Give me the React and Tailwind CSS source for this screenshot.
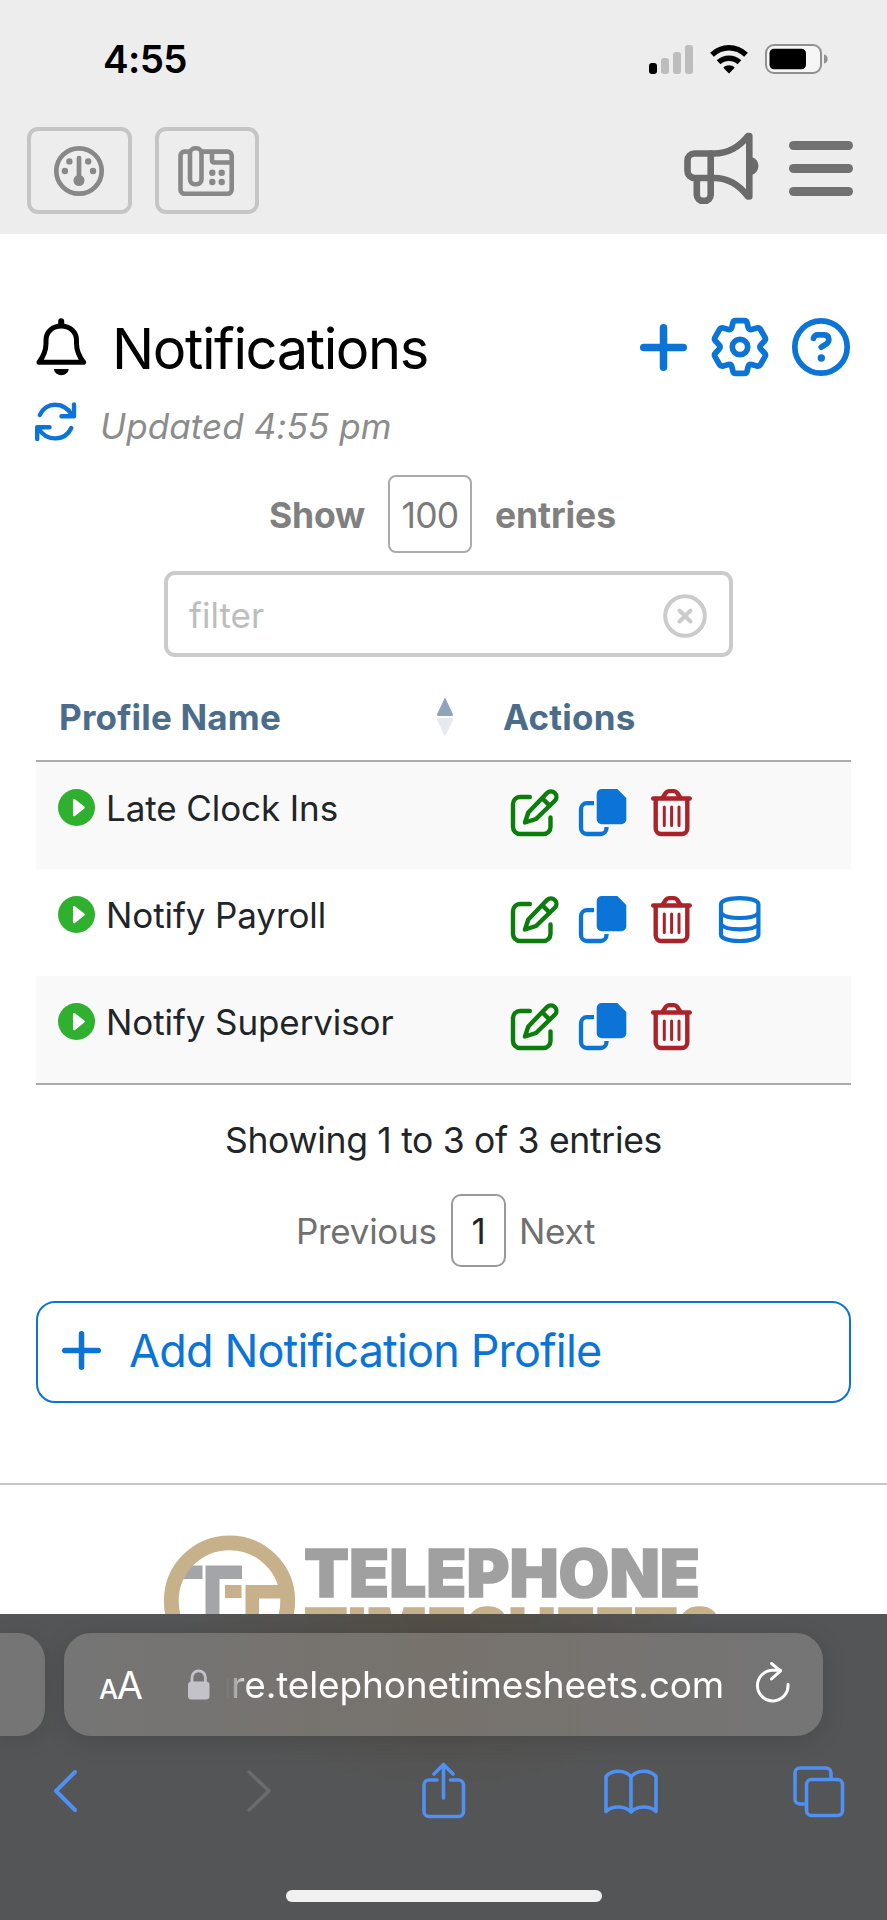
import React, { useState } from 'react';

const profiles = [
  { id: 1, name: 'Late Clock Ins', hasData: false },
  { id: 2, name: 'Notify Payroll', hasData: true },
  { id: 3, name: 'Notify Supervisor', hasData: false },
];

// Shared wrapper for all stroked icons
const Icon = ({ w, h, sw = 4, className = '', children }) => (
  <svg
    width={w}
    height={h}
    viewBox={`0 0 ${w} ${h}`}
    fill="none"
    stroke="currentColor"
    strokeWidth={sw}
    strokeLinecap="round"
    strokeLinejoin="round"
    className={`shrink-0 overflow-visible ${className}`}
  >
    {children}
  </svg>
);

const GaugeIcon = () => (
  <Icon w={50} h={50} sw={4.7}>
    <circle cx="25" cy="25" r="22.7" />
    <path d="M25 12V32" />
    <g fill="currentColor" stroke="none">
      <circle cx="25" cy="34.5" r="5.5" />
      <circle cx="15.4" cy="15.4" r="3.2" />
      <circle cx="34.2" cy="15.4" r="3.2" />
      <circle cx="10.9" cy="25" r="3.2" />
      <circle cx="39" cy="25" r="3.2" />
    </g>
  </Icon>
);

const FaxIcon = () => (
  <Icon w={56} h={50} sw={4.6}>
    <path d="M11 5.6H6.5a4 4 0 0 0-4 4V43.7a4 4 0 0 0 4 4H49.7a4 4 0 0 0 4-4V9.6a4 4 0 0 0-4-4H24" />
    <rect x="12" y="2.3" width="11.5" height="36" rx="5" />
    <path d="M34 6V14.5a2 2 0 0 0 2 2H53" />
    <g fill="currentColor" stroke="none">
      <circle cx="34.3" cy="26.7" r="3.2" />
      <circle cx="43.7" cy="26.7" r="3.2" />
      <circle cx="34.3" cy="36" r="3.2" />
      <circle cx="43.7" cy="36" r="3.2" />
    </g>
  </Icon>
);

const MegaphoneIcon = () => (
  <Icon w={73} h={72} sw={6.6}>
    <path d="M26.7 21.5H10.5a7 7 0 0 0-7 7V39a7 7 0 0 0 7 7H26.7Z" />
    <path d="M26.7 21.5H30C44 21.5 56 14 64 4H65.3V64.5H64C56 54 44 46 30 46H26.7" />
    <path d="M12.8 46.5V62.8a6 6 0 0 0 6 6H20.7a6 6 0 0 0 6-6V46.5" />
    <path d="M67.5 25a9.3 9.3 0 0 1 0 18Z" fill="currentColor" stroke="none" />
  </Icon>
);

const BellIcon = () => (
  <Icon w={51} h={58} sw={5}>
    <path d="M3 44.3C7 39 10 32.5 10 25.5V22.5C10 13.5 17 8 25.2 8S40.5 13.5 40.5 22.5V25.5C40.5 32.500 43.5 39 47.7 44.3Z" />
    <path d="M25.2 3.2V7" strokeWidth="6" />
    <path d="M17.8 51H32.8A7.6 7.6 0 0 1 17.8 51Z" fill="currentColor" stroke="none" />
  </Icon>
);

const RefreshIcon = () => (
  <Icon w={41} h={39} sw={4.4}>
    <path d="M4.8 13C10.5-0.5 29-1 37.5 13.5" />
    <path d="M39 2.5V14.2H26.5" />
    <path d="M36.3 26C30 39.5 11.5 40 3.5 26.5" />
    <path d="M2.2 37V25.3H14.5" />
  </Icon>
);

const PlusIcon = ({ size, sw }) => (
  <Icon w={size} h={size} sw={sw}>
    <path d={`M${size / 2} ${sw / 2}V${size - sw / 2}M${sw / 2} ${size / 2}H${size - sw / 2}`} />
  </Icon>
);

const GearIcon = () => (
  <Icon w={56} h={58} sw={5.7}>
    <g transform="translate(28 29)">
      <path d="M-4.5-26.4H4.5Q6.5-26.4 7-24.5L8.2-19.5Q9-17 11.5-17.500L17-19Q19.3-19.6 20.5-17.5L25-9.7Q26.2-7.5 24.5-6L21-2.3Q19 0 21 2.3L24.5 6Q26.2 7.5 25 9.7L20.5 17.5Q19.3 19.6 17 19L11.5 17.5Q9 17 8.2 19.5L7 24.5Q6.5 26.4 4.5 26.4H-4.5Q-6.5 26.4-7 24.5L-8.2 19.5Q-9 17-11.5 17.5L-17 19Q-19.3 19.6-20.5 17.5L-25 9.7Q-26.2 7.5-24.5 6L-21 2.3Q-19 0-21-2.3L-24.5-6Q-26.2-7.5-25-9.7L-20.5-17.5Q-19.3-19.6-17-19L-11.5-17.5Q-9-17-8.2-19.5L-7-24.5Q-6.5-26.4-4.5-26.4Z" />
      <circle r="7.7" />
    </g>
  </Icon>
);

const HelpIcon = () => (
  <Icon w={58} h={58} sw={5.7}>
    <circle cx="29" cy="29" r="26.2" />
    <path d="M21.5 20.3Q22.3 16.8 26 16.8H32Q36.8 17 36.8 21.5Q36.8 24.5 34 26.2L29.3 29.2" />
    <circle cx="29.3" cy="40" r="3.7" fill="currentColor" stroke="none" />
  </Icon>
);

const ClearIcon = () => (
  <Icon w={44} h={44} sw={4} className="mt-[3px]">
    <circle cx="22" cy="22" r="19.8" />
    <path d="M16.5 16.5L27.5 27.5M27.5 16.5L16.5 27.5" />
  </Icon>
);

const PlayIcon = () => (
  <svg width="37" height="37" viewBox="0 0 37 37" className="shrink-0">
    <circle cx="18.5" cy="18.5" r="18.5" fill="#2fb12f" />
    <path d="M16.2 11.2L25.5 18.5L16.2 26Z" fill="#fff" stroke="#fff" strokeWidth="2.5" strokeLinejoin="round" />
  </svg>
);

const EditIcon = () => (
  <Icon w={48} h={47} sw={4.4} className="text-[#0b7d0b]">
    <path d="M18.8 8H9A7 7 0 0 0 2 15V38A7 7 0 0 0 9 45H32.500A7 7 0 0 0 39.5 38V28.5" />
    <path d="M14 33.5L17.3 23.5L36 4A5.5 5.5 0 0 1 43.8 11.8L25 30Z" />
    <path d="M31.5 9.5L38.5 16.5" />
  </Icon>
);

const CopyIcon = () => (
  <Icon w={48} h={47} sw={4.3} className="text-[#0b74d6]">
    <path d="M22.7 0H38.3L47.3 9V30.3a5 5 0 0 1-5 5H22.7a5 5 0 0 1-5-5V5a5 5 0 0 1 5-5Z" fill="currentColor" stroke="none" />
    <path d="M15 14.2H8A6 6 0 0 0 2 20.2V39A6 6 0 0 0 8 45H21.5A6 6 0 0 0 27.5 39V38" strokeLinecap="butt" />
  </Icon>
);

const TrashIcon = () => (
  <Icon w={42} h={47} sw={4.4} className="text-[#ab2328]">
    <path d="M2.2 9.5H38.7" />
    <path d="M11.5 9L14.7 4Q16 2.1 18 2.1H23Q25 2.1 26.3 4L29.5 9" />
    <path d="M4.7 10V39.5A5.5 5.5 0 0 0 10.2 45H30.8A5.5 5.5 0 0 0 36.3 39.500V10" />
    <path d="M13.3 18V36.5M20.6 18V36.5M28 18V36.5" strokeWidth="3" />
  </Icon>
);

const DatabaseIcon = () => (
  <Icon w={42} h={47} sw={4.2} className="text-[#0b74d6]">
    <path d="M2 8.5C2 4.5 10 2.1 20.700 2.1S39.4 4.5 39.4 8.5V38.5C39.4 42.5 31.5 45 20.7 45S2 42.5 2 38.5Z" />
    <path d="M2.5 17.5C5 20.5 12 22 20.7 22S36.5 20.5 39 17.5" />
    <path d="M2.5 29C5 32 12 33.3 20.7 33.3S36.5 32 39 29" />
  </Icon>
);

const StatusBar = () => (
  <div className="flex h-[118px] justify-between pl-[103px] pr-[59px]">
    <div className="h-[118px] text-[38.5px] leading-[118px] font-semibold tracking-[-0.6px] text-black">4:55</div>
    <div className="flex h-[118px] items-center gap-[17px]">
      <div className="flex h-[29px] items-end gap-1">
        <span className="h-[11px] w-2 rounded-[3px] bg-black" />
        <span className="h-4 w-2 rounded-[3px] bg-[#bdbdbd]" />
        <span className="h-[22px] w-2 rounded-[3px] bg-[#bdbdbd]" />
        <span className="h-[29px] w-2 rounded-[3px] bg-[#bdbdbd]" />
      </div>
      <svg width="38" height="29" viewBox="0 0 38 29" fill="none" stroke="#000" strokeWidth="5.5">
        <path d="M2 9.8C12 .5 26 .5 36 9.8" />
        <path d="M8.6 17.2C14.5 11.8 23.5 11.8 29.4 17.2" />
        <path d="M19 28.5L13.3 22.7C16.5 19.5 21.5 19.5 24.7 22.7Z" fill="#000" stroke="none" />
      </svg>
      <svg width="63" height="30" viewBox="0 0 63 30">
        <rect x="1" y="1" width="55" height="28" rx="8" fill="#f6f6f6" stroke="#909090" strokeWidth="2" />
        <rect x="4.5" y="4.8" width="36.5" height="20.5" rx="4.500" fill="#000" />
        <path d="M59 10.5A4.6 4.6 0 0 1 59 19.5Z" fill="#909090" />
      </svg>
    </div>
  </div>
);

const NavBar = () => (
  <div className="flex h-[116px] items-start justify-between pl-[27px] pr-[34px]">
    <div className="flex gap-[23px] pt-[9px] text-[#888]">
      <button className="flex h-[87px] w-[105px] items-center justify-center rounded-[11px] border-4 border-[#c5c5c5] pr-px">
        <GaugeIcon />
      </button>
      <button className="flex h-[87px] w-[104px] items-center justify-center rounded-[11px] border-4 border-[#c5c5c5] pr-[3px]">
        <FaxIcon />
      </button>
    </div>
    <div className="flex gap-8 pt-[14px] text-[#6b6b6b]">
      <MegaphoneIcon />
      <button className="mt-[9px] flex h-[55px] w-16 flex-col justify-between">
        <span className="h-[9px] w-full rounded-full bg-[#717171]" />
        <span className="h-[9px] w-full rounded-full bg-[#717171]" />
        <span className="h-[9px] w-full rounded-full bg-[#717171]" />
      </button>
    </div>
  </div>
);

const ProfileTable = () => (
  <div className="border-b-2 border-[#acacac]">
    <div className="flex h-[90px] border-b-2 border-[#acacac] pl-[23px] text-[35px] font-bold text-[#4b6d8b]">
      <div className="flex w-[395px] justify-between leading-[90px]">
        <span className="tracking-[0.2px]">Profile Name</span>
        <svg width="18" height="40" viewBox="0 0 18 40" className="mt-[25px]">
          <path d="M9 1.5L16.5 17.3Q17 18.5 16 18.5H2Q1 18.5 1.5 17.3Z" fill="#8da5bb" stroke="#8da5bb" strokeLinejoin="round" />
          <path d="M9 38.5L1.5 22.7Q1 21.5 2 21.5H16Q17 21.5 16.5 22.7Z" fill="#e6e9ee" stroke="#e6e9ee" strokeLinejoin="round" />
        </svg>
      </div>
      <span className="ml-[49px] leading-[90px] tracking-[0.2px]">Actions</span>
    </div>
    {profiles.map((p) => (
      <div key={p.id} className="flex h-[107px] items-start pt-[27px] pl-[22px] odd:bg-white even:bg-[#f9f9f9]">
        <PlayIcon />
        <span className="ml-[11px] h-[38px] w-[405px] text-[35px] leading-[38px] tracking-[-0.1px] text-[#212529]">{p.name}</span>
        <div className="flex">
          <EditIcon />
          <span className="w-5" />
          <CopyIcon />
          <span className="w-[24px]" />
          <TrashIcon />
          <span className="w-[26px]" />
          {p.hasData && <DatabaseIcon />}
        </div>
      </div>
    ))}
  </div>
);

const Footer = () => (
  <div className="h-[131px] overflow-hidden border-t-2 border-[#c8c8c8]">
    <svg width="887" height="130" viewBox="0 1486 887 130" className="block">
      <g fill="#a3a5a8">
        <path d="M190 1566.5H202.5V1580H183Z" />
        <path d="M205.5 1566.5H242V1580H219.5V1650H205.5Z" />
      </g>
      <g fill="#c6b18b">
        <path d="M225 1586H241.5V1599H225Z" />
        <path d="M245.5 1586H284V1599.5H259V1650H245.5Z" />
      </g>
      <circle cx="229.5" cy="1602" r="58.2" fill="none" stroke="#c6b18b" strokeWidth="14.8" />
      <g fontFamily="Inter, sans-serif" fontWeight="900" fontSize="66">
        <text x="304" y="1598" fill="#a0a0a0" stroke="#a0a0a0" strokeWidth="1.5" textLength="396" lengthAdjust="spacingAndGlyphs">TELEPHONE</text>
        <text x="304" y="1656.5" fill="#c6b18b" stroke="#c6b18b" strokeWidth="1.5" textLength="416" lengthAdjust="spacingAndGlyphs">TIMESHEETS</text>
      </g>
    </svg>
  </div>
);

const SafariBar = () => (
  <div className="h-[306px] bg-[#545556] bg-[radial-gradient(ellipse_at_50%_0%,#534e46_0%,#53514d_18%,transparent_42%)]">
    <div className="flex gap-[19px] pt-[19px]">
      <div className="h-[103px] w-[45px] rounded-r-[27px] bg-[#757575] shadow-[0_4px_24px_rgba(0,0,0,0.12)]" />
      <div className="flex h-[103px] w-[759px] items-center rounded-[27px] bg-linear-to-r from-[#757575] via-[#77726c] to-[#757576] pl-[35px] text-white shadow-[0_4px_24px_rgba(0,0,0,0.14)]">
        <div className="flex w-11 items-baseline justify-between leading-none">
          <span className="text-[27px] font-medium">A</span>
          <span className="-ml-1 text-[38px]">A</span>
        </div>
        <svg width="22" height="31" viewBox="0 0 22 31" className="ml-[45px]">
          <rect x="0" y="12.5" width="21.5" height="18" rx="3.500" fill="#c4c2c9" />
          <path d="M4 13V8.5a6.7 6.7 0 0 1 13.4 0V13" fill="none" stroke="#c4c2c9" strokeWidth="2.8" />
        </svg>
        <div className="ml-4 flex w-[498px] justify-end overflow-hidden text-[37px] leading-[60px] tracking-[-0.15px] whitespace-nowrap [mask-image:linear-gradient(to_right,transparent,black_24px)]">
          secure.telephonetimesheets.com
        </div>
        <Icon w={34} h={40} sw={3} className="mb-[5px] ml-8">
          <path d="M32 22.5A15.300 15.3 0 1 1 17 8.300H24.5" />
          <path d="M15.5 1.5L24.5 8.8L15.5 17" />
        </Icon>
      </div>
    </div>
    <div className="flex h-[110px] items-center pl-[54px] text-[#4f90f1]">
      <Icon w={23} h={42} sw={4}>
        <path d="M21 2L2 21L21 40" />
      </Icon>
      <Icon w={24} h={42} sw={3.5} className="ml-[170px] text-[#6c6c6c]">
        <path d="M2 2L22 21L2 40" />
      </Icon>
      <Icon w={43} h={56} sw={3.6} className="ml-[151px]">
        <path d="M15 17H7A5 5 0 0 0 2 22V48.5A5 5 0 0 0 7 53.5H36.5A5 5 0 0 0 41.5 48.5V22A5 5 0 0 0 36.5 17H28.5" />
        <path d="M21.5 35V2M12 11L21.5 1.5L31 11" />
      </Icon>
      <Icon w={54} h={45} sw={3.6} className="ml-[139px]">
        <path d="M27 8C21 .5 8 .5 2 7.5V42.5C8 36.5 21 36.5 27 43C33 36.5 46 36.5 52 42.5V7.5C46 .5 33 .5 27 8Z" />
        <path d="M27 8V42" />
      </Icon>
      <Icon w={51} h={51} sw={3.6} className="ml-[135px]">
        <rect x="13.5" y="13.5" width="36" height="36" rx="5" />
        <path d="M13 38H7A5 5 0 0 1 2 33V7A5 5 0 0 1 7 2H33A5 5 0 0 1 38 7V12" />
      </Icon>
    </div>
    <div className="mx-auto mt-[44px] h-3 w-[316px] rounded-full bg-[#f0f0f0]" />
  </div>
);

const App = () => {
  const [filter, setFilter] = useState('');

  return (
    <div className="h-[1920px] w-[887px] overflow-hidden bg-white font-['Inter',sans-serif]">
      <header className="h-[234px] bg-[#ededed]">
        <StatusBar />
        <NavBar />
      </header>

      <main className="h-[1249px] px-9">
        {/* Page title */}
        <div className="box-content flex h-[60px] items-center justify-between pt-[83px]">
          <div className="flex items-center">
            <BellIcon />
            <h1 className="mt-[3px] ml-[25px] text-[56px] leading-[60px] tracking-[-1.4px] text-black">Notifications</h1>
          </div>
          <div className="flex items-center pr-px text-[#0b74d6]">
            <PlusIcon size={47} sw={7.5} />
            <span className="w-[25px]" />
            <GearIcon />
            <span className="w-6" />
            <HelpIcon />
          </div>
        </div>
        <div className="mt-6 flex h-[44px] items-center">
          <div className="-mt-[3px] -ml-px text-[#0b74d6]">
            <RefreshIcon />
          </div>
          <span className="mt-[6px] ml-6 text-[35px] leading-[44px] tracking-[0.1px] text-[#8c8c8c] italic">Updated 4:55 pm</span>
        </div>

        {/* Table controls */}
        <div className="mt-[30px] ml-[233px] flex h-[78px] items-center text-[35.5px] font-bold text-[#808080]">
          <span className="w-[119px] pt-[3px] tracking-[-0.2px]">Show</span>
          <span className="flex h-[78px] w-[84px] items-center justify-center rounded-lg border-2 border-[#aaa] pt-[3px] font-normal tracking-[-0.8px] text-[#7a7a7a]">100</span>
          <span className="ml-[23px] pt-[3px] tracking-[-0.1px]">entries</span>
        </div>
        <div className="mt-[18px] ml-[128px] flex h-[86px] w-[569px] items-center justify-between rounded-[11px] border-4 border-[#cbcbcb] pr-[22px] pl-[21px] text-[#cbcbcb]">
          <input
            value={filter}
            onChange={(e) => setFilter(e.target.value)}
            placeholder="filter"
            className="w-[400px] pt-[3px] text-[35px] text-gray-700 placeholder:text-[#bdbdbd] focus:outline-none"
          />
          <ClearIcon />
        </div>

        <div className="mt-[15px]">
          <ProfileTable />
        </div>

        <p className="mt-[31px] h-[50px] text-center text-[35.5px] leading-[50px] tracking-[-0.3px] text-[#212529]">Showing 1 to 3 of 3 entries</p>
        <div className="mt-[28px] ml-[260px] flex h-[73px] items-center text-[35px] text-[#707070]">
          <span className="w-[155px] pt-[2px] tracking-[-0.3px]">Previous</span>
          <span className="flex h-[73px] w-[55px] items-center justify-center rounded-[10px] border-2 border-[#999] pt-[2px] text-[#212529]">1</span>
          <span className="ml-[13px] pt-[2px] tracking-[-0.3px]">Next</span>
        </div>

        <button className="mt-[34px] flex h-[102px] w-[815px] items-center rounded-[19px] border-2 border-[#0b74d6] pb-1 pl-6 text-[#0b74d6]">
          <PlusIcon size={39} sw={5.5} />
          <span className="ml-[28px] pt-[2px] text-[45px] tracking-[-0.85px]">Add Notification Profile</span>
        </button>
      </main>

      <Footer />
      <SafariBar />
    </div>
  );
};

export default App;
